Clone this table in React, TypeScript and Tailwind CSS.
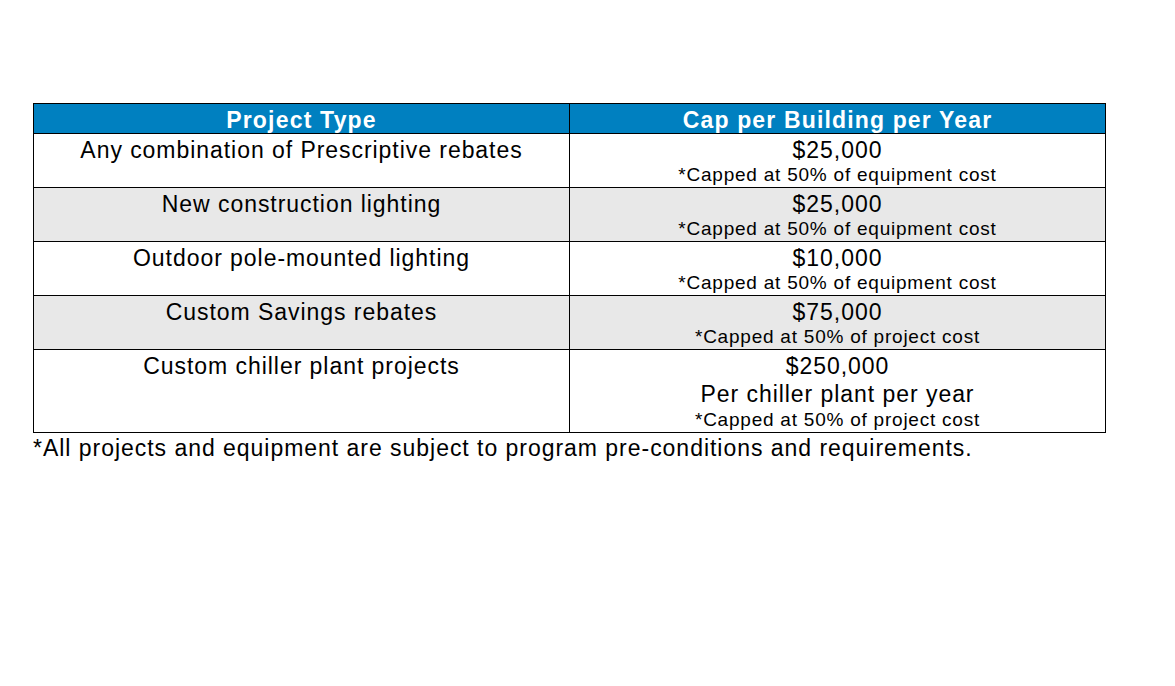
import React from "react";

const rows = [
  { left: "Any combination of Prescriptive rebates", amt: "$25,000", note: "*Capped at 50% of equipment cost", gray: false },
  { left: "New construction lighting", amt: "$25,000", note: "*Capped at 50% of equipment cost", gray: true },
  { left: "Outdoor pole-mounted lighting", amt: "$10,000", note: "*Capped at 50% of equipment cost", gray: false },
  { left: "Custom Savings rebates", amt: "$75,000", note: "*Capped at 50% of project cost", gray: true },
];

export default function App() {
  return (
    <div
      className="w-[1175px] h-[686px] bg-white pt-[103px] pl-[33px]"
      style={{ fontFamily: '"Liberation Sans", Arial, sans-serif' }}
    >
      <table className="border-collapse w-[1073px] text-black">
        <thead>
          <tr className="bg-[#0080c0] h-[30px]">
            <th className="border border-black w-[536px] p-0 text-white font-bold text-[23px] tracking-[1.2px] leading-[26px] align-bottom">
              Project Type
            </th>
            <th className="border border-black w-[536px] p-0 text-white font-bold text-[23px] tracking-[1.15px] leading-[26px] align-bottom">
              Cap per Building per Year
            </th>
          </tr>
        </thead>
        <tbody>
          {rows.map((r, i) => (
            <tr key={i} className={`h-[54px] ${r.gray ? "bg-[#e8e8e8]" : "bg-white"}`}>
              <td className="border border-black p-0 pt-[3px] text-center align-top text-[23px] tracking-[0.95px] leading-[26px]">
                {r.left}
              </td>
              <td className="border border-black p-0 pt-[3px] text-center align-top">
                <div className="text-[23px] tracking-[0.95px] leading-[26px]">{r.amt}</div>
                <div className="text-[19px] tracking-[0.77px] leading-[24px]">{r.note}</div>
              </td>
            </tr>
          ))}
          <tr className="h-[83px] bg-white">
            <td className="border border-black p-0 pt-[3px] text-center align-top text-[23px] tracking-[0.95px] leading-[26px]">
              Custom chiller plant projects
            </td>
            <td className="border border-black p-0 pt-[3px] text-center align-top">
              <div className="text-[23px] tracking-[0.95px] leading-[26px]">$250,000</div>
              <div className="text-[23px] tracking-[0.95px] leading-[30px]">Per chiller plant per year</div>
              <div className="text-[19px] tracking-[0.77px] leading-[22px]">*Capped at 50% of project cost</div>
            </td>
          </tr>
        </tbody>
      </table>
      <div className="text-[23px] tracking-[0.97px] leading-[30px] text-black">
        *All projects and equipment are subject to program pre-conditions and requirements.
      </div>
    </div>
  );
}
